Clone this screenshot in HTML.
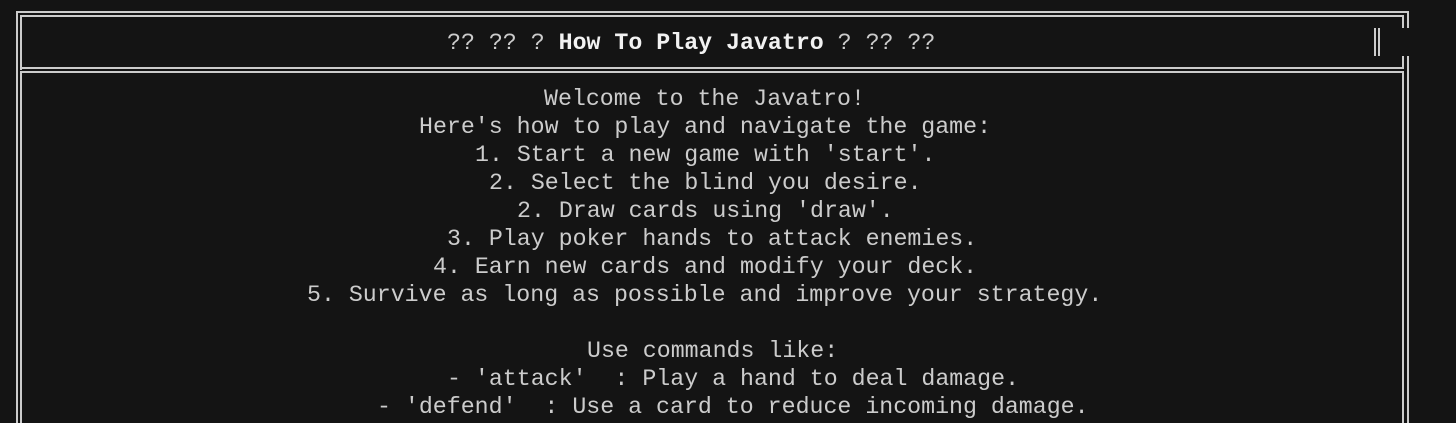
<!DOCTYPE html>
<html><head><meta charset="utf-8"><style>
html,body{margin:0;padding:0;background:#141414;width:1456px;height:423px;overflow:hidden;position:relative}
.l{position:absolute;background:#cccccc}
.t{position:absolute;font-family:"Liberation Mono",monospace;font-size:23.25px;line-height:28px;color:#cccccc;white-space:pre;height:28px}
b{color:#f2f2f2;font-weight:bold}
</style></head><body>
<div class="l" style="left:16px;top:11px;width:1393px;height:2px"></div>
<div class="l" style="left:16px;top:11px;width:2px;height:412px"></div>
<div class="l" style="left:20px;top:15px;width:1384px;height:2px"></div>
<div class="l" style="left:20px;top:15px;width:2px;height:55px"></div>
<div class="l" style="left:20px;top:67px;width:1384px;height:2px"></div>
<div class="l" style="left:20px;top:71px;width:1384px;height:2px"></div>
<div class="l" style="left:20px;top:71px;width:2px;height:352px"></div>
<div class="l" style="left:1407px;top:11px;width:2px;height:17px"></div>
<div class="l" style="left:1402px;top:15px;width:2px;height:13px"></div>
<div class="l" style="left:1407px;top:56px;width:2px;height:367px"></div>
<div class="l" style="left:1402px;top:56px;width:2px;height:13px"></div>
<div class="l" style="left:1402px;top:71px;width:2px;height:352px"></div>
<div class="l" style="left:1374px;top:28px;width:2px;height:28px"></div>
<div class="l" style="left:1378px;top:28px;width:2px;height:28px"></div>

<div class="t" style="left:447px;top:29px">?? ?? ? <b>How To Play Javatro</b> ? ?? ??</div>
<div class="t" style="left:544px;top:85px">Welcome to the Javatro!</div>
<div class="t" style="left:419px;top:113px">Here's how to play and navigate the game:</div>
<div class="t" style="left:475px;top:141px">1. Start a new game with 'start'.</div>
<div class="t" style="left:489px;top:169px">2. Select the blind you desire.</div>
<div class="t" style="left:517px;top:197px">2. Draw cards using 'draw'.</div>
<div class="t" style="left:447px;top:225px">3. Play poker hands to attack enemies.</div>
<div class="t" style="left:433px;top:253px">4. Earn new cards and modify your deck.</div>
<div class="t" style="left:307px;top:281px">5. Survive as long as possible and improve your strategy.</div>
<div class="t" style="left:587px;top:337px">Use commands like:</div>
<div class="t" style="left:447px;top:365px">- 'attack'  : Play a hand to deal damage.</div>
<div class="t" style="left:377px;top:393px">- 'defend'  : Use a card to reduce incoming damage.</div>
</body></html>
